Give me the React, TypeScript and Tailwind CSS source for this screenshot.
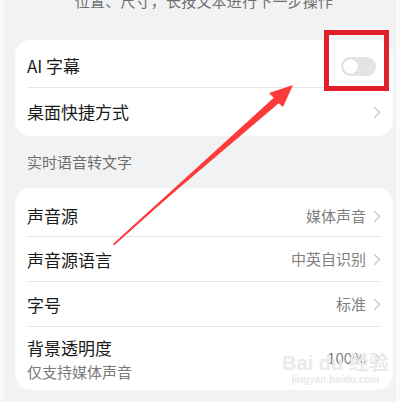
import React from 'react';

const font = { fontFamily: '"Noto Sans CJK SC", "Noto Sans", sans-serif' };

function Chevron() {
  return (
    <svg width="8" height="13" viewBox="0 0 8 13" className="ml-[7px] shrink-0">
      <path d="M1.5 1.5 L6.5 6.5 L1.5 11.5" fill="none" stroke="#c4c4c4" strokeWidth="1.2" strokeLinecap="round" strokeLinejoin="round" />
    </svg>
  );
}

function Row({ label, value, sub, h, divider = true }: { label: string; value?: string; sub?: string; h: string; divider?: boolean }) {
  return (
    <div className={`relative flex items-center justify-between pl-[12px] pr-[12px] ${h}`}>
      <div className="flex flex-col">
        <span className="text-[17px] leading-[24px] text-[#1b1b1b]">{label}</span>
        {sub && <span className="mt-[2px] text-[15px] leading-[20px] text-[#7a7a7a]">{sub}</span>}
      </div>
      {value !== undefined && (
        <div className="flex items-center">
          <span className="text-[15px] text-[#808080]">{value}</span>
          <Chevron />
        </div>
      )}
      {divider && <div className="absolute bottom-0 left-[12px] right-[12px] h-px bg-[#e6e6e6]" />}
    </div>
  );
}

export default function App() {
  return (
    <div className="relative h-[402px] w-[400px] overflow-hidden bg-[#f1f2f4]" style={font}>
      <div className="flex h-full">
        <div className="w-[4px] shrink-0 bg-[#f8f8f9]" />
        <div className="flex flex-1 flex-col pl-[11px] pr-[3px]">
          <div className="-mt-[9px] h-[49px] text-center text-[15px] leading-[20px] tracking-[0.2px] text-[#707070]">
            位置、尺寸，长按文本进行下一步操作
          </div>

          <div className="rounded-[16px] bg-white">
            <div className="relative flex h-[48px] items-center justify-between pl-[12px] pr-[17px] pt-[4px]">
              <span className="text-[17px] text-[#1b1b1b]">AI 字幕</span>
              <div className="flex h-[19px] w-[35px] items-center rounded-full bg-[#e4e4e4] p-[2px]">
                <div className="h-[15px] w-[15px] rounded-full bg-white shadow-[0_0_1px_rgba(0,0,0,0.25)]" />
              </div>
              <div className="absolute bottom-0 left-[12px] right-[12px] h-px bg-[#e6e6e6]" />
            </div>
            <Row label="桌面快捷方式" value="" h="h-[48px]" divider={false} />
          </div>

          <div className="flex h-[52px] items-center pl-[12px] text-[15px] text-[#6e6e6e]">实时语音转文字</div>

          <div className="rounded-[16px] bg-white">
            <Row label="声音源" value="媒体声音" h="h-[49px] pt-[7px]" />
            <Row label="声音源语言" value="中英自识别" h="h-[45px]" />
            <Row label="字号" value="标准" h="h-[45px]" />
            <Row label="背景透明度" value="100%" sub="仅支持媒体声音" h="h-[63px]" divider={false} />
          </div>
        </div>
        <div className="w-[4px] shrink-0 bg-[#fbfbfb]" />
      </div>

      {/* watermark */}
      <div className="pointer-events-none absolute left-[282px] top-[352px] flex flex-col items-center text-[#eaeaea]">
        <span className="text-[20px] font-bold leading-[22px]" style={{ fontFamily: '"Liberation Sans", "Noto Sans CJK SC", sans-serif' }}>Bai du 经验</span>
        <span className="text-[10px] font-bold leading-[12px]" style={{ fontFamily: '"Liberation Sans", sans-serif' }}>jingyan.baidu.com</span>
      </div>

      {/* annotation overlay */}
      <svg className="pointer-events-none absolute left-0 top-0" width="400" height="402" viewBox="0 0 400 402">
        <rect x="326.5" y="32.5" width="60" height="56" fill="none" stroke="#e21f2b" strokeWidth="5" />
        <polygon points="113,244 114,245.5 276,101 283,107 293,85 269,93 275,99" fill="#fd3a3a" />
        <polygon points="113,244 274,97.5 279,103" fill="#fd3a3a" />
      </svg>
    </div>
  );
}
